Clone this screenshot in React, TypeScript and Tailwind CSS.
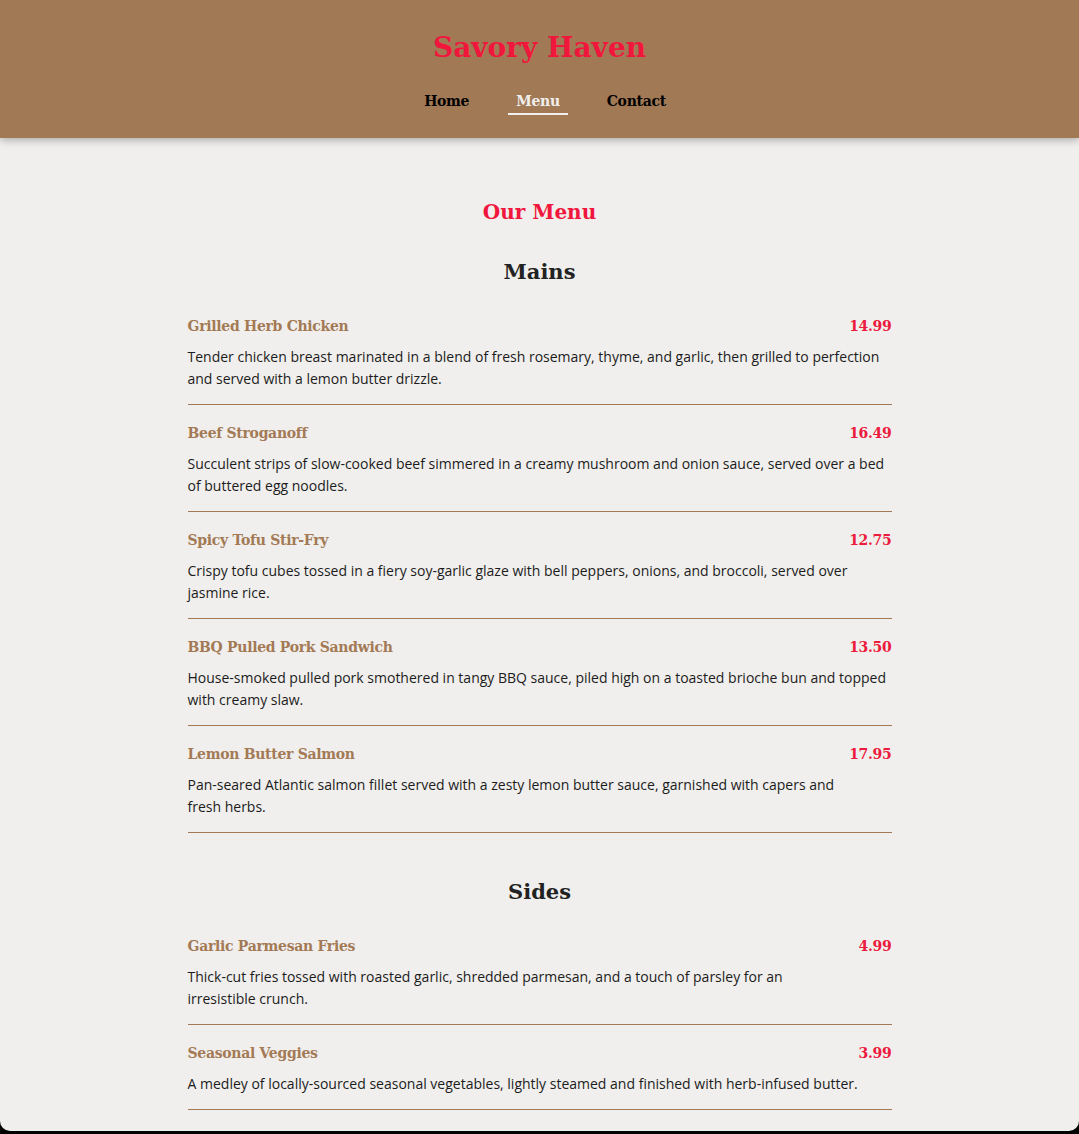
const slab = { fontFamily: '"DejaVu Serif", "Liberation Serif", serif' };

type Item = { name: string; price: string; desc: string };

const mains: Item[] = [
  {
    name: 'Grilled Herb Chicken',
    price: '14.99',
    desc: 'Tender chicken breast marinated in a blend of fresh rosemary, thyme, and garlic, then grilled to perfection and served with a lemon butter drizzle.',
  },
  {
    name: 'Beef Stroganoff',
    price: '16.49',
    desc: 'Succulent strips of slow-cooked beef simmered in a creamy mushroom and onion sauce, served over a bed of buttered egg noodles.',
  },
  {
    name: 'Spicy Tofu Stir-Fry',
    price: '12.75',
    desc: 'Crispy tofu cubes tossed in a fiery soy-garlic glaze with bell peppers, onions, and broccoli, served over jasmine rice.',
  },
  {
    name: 'BBQ Pulled Pork Sandwich',
    price: '13.50',
    desc: 'House-smoked pulled pork smothered in tangy BBQ sauce, piled high on a toasted brioche bun and topped with creamy slaw.',
  },
  {
    name: 'Lemon Butter Salmon',
    price: '17.95',
    desc: 'Pan-seared Atlantic salmon fillet served with a zesty lemon butter sauce, garnished with capers and fresh herbs.',
  },
];

const sides: Item[] = [
  {
    name: 'Garlic Parmesan Fries',
    price: '4.99',
    desc: 'Thick-cut fries tossed with roasted garlic, shredded parmesan, and a touch of parsley for an irresistible crunch.',
  },
  {
    name: 'Seasonal Veggies',
    price: '3.99',
    desc: 'A medley of locally-sourced seasonal vegetables, lightly steamed and finished with herb-infused butter.',
  },
];

function MenuItem({ item }: { item: Item }) {
  return (
    <div className="border-b border-[#a37a55] pt-4 pb-[14px]">
      <div className="flex items-center justify-between leading-6 tracking-[-0.3px]" style={slab}>
        <span className="text-[14px] font-bold text-[#a37a55]">{item.name}</span>
        <span className="text-[14px] font-bold text-[#ec1a3c]">{item.price}</span>
      </div>
      <p
        className="mt-2 text-[14px] leading-[22px] text-[#1c1c1c] text-pretty"
        style={{ fontFamily: '"Open Sans", sans-serif' }}
      >
        {item.desc}
      </p>
    </div>
  );
}

function Section({ title, items }: { title: string; items: Item[] }) {
  return (
    <section>
      <h3
        className="text-center text-[21px] font-bold leading-8 text-[#222] mb-[10px]"
        style={slab}
      >
        {title}
      </h3>
      {items.map((item) => (
        <MenuItem key={item.name} item={item} />
      ))}
    </section>
  );
}

export default function App() {
  return (
    <div className="h-[1134px] bg-black overflow-hidden">
      <div className="h-[1131px] overflow-hidden rounded-b-[10px] bg-[#f0efed]">
        <header className="relative z-10 bg-[#a17955] pt-[28px] pb-[23px] shadow-[0_2px_8px_rgba(0,0,0,0.3)]">
          <h1
            className="text-center text-[28px] font-bold leading-10 text-[#f0163c]"
            style={slab}
          >
            Savory Haven
          </h1>
          <nav
            className="mt-[21px] flex justify-center gap-[31px] pl-[11px] tracking-[-0.3px]"
            style={slab}
          >
            <a className="border-b-2 border-transparent px-2 text-[14px] font-bold leading-6 text-black">
              Home
            </a>
            <a className="border-b-2 border-[#f0efed] px-2 text-[14px] font-bold leading-6 text-[#f0efed]">
              Menu
            </a>
            <a className="border-b-2 border-transparent px-2 text-[14px] font-bold leading-6 text-black">
              Contact
            </a>
          </nav>
        </header>

        <main className="mx-auto w-[704px] pt-[58px]">
          <h2
            className="text-center text-[20px] font-bold leading-8 text-[#f0163c] mb-7"
            style={slab}
          >
            Our Menu
          </h2>
          <Section title="Mains" items={mains} />
          <div className="h-[43px]" />
          <Section title="Sides" items={sides} />
        </main>
      </div>
    </div>
  );
}
